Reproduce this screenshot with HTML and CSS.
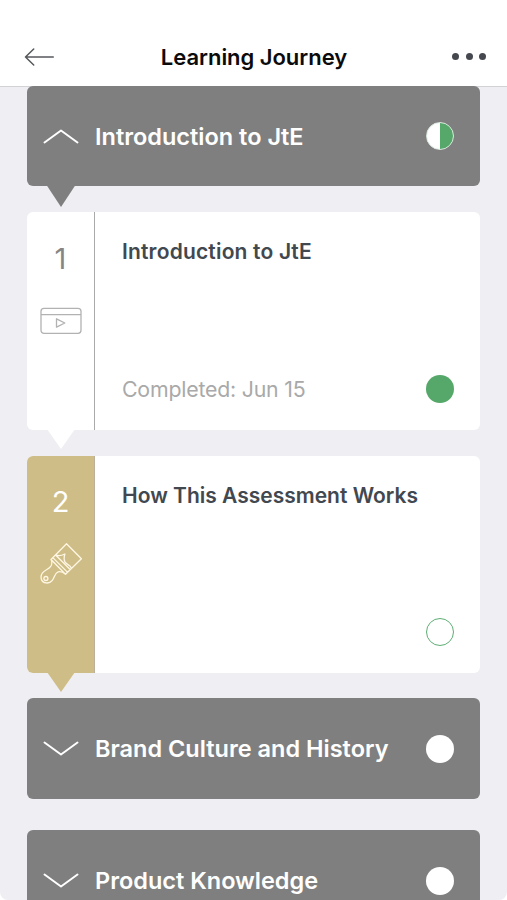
FILE: index.html
```html
<!DOCTYPE html>
<html lang="en">
<head>
<meta charset="utf-8">
<title>Learning Journey</title>
<link rel="stylesheet" href="styles.css">
</head>
<body>
<div class="screen">
  <header class="header">
    <svg class="back" viewBox="0 0 30 18"><path d="M29.3 9H1.5M9.7 1L1.5 9l8.200 8"/></svg>
    <h1 class="header-title">Learning Journey</h1>
    <div class="more"><i></i><i></i><i></i></div>
  </header>
  <main class="list">
    <section class="group group-open">
      <svg class="chevron" viewBox="0 0 36 16"><path d="M1.5 14.5L18 2.500l16.500 12"/></svg>
      <h2 class="group-title">Introduction to JtE</h2>
      <span class="status half"></span>
    </section>
    <article class="lesson">
      <div class="rail">
        <span class="number">1</span>
        <svg class="icon video" viewBox="0 0 42 42"><rect x="1" y="8.300" width="40" height="25" rx="3"/><path d="M1 14.700h40M16.500 18.800v8.400l8.300-4.200z"/></svg>
      </div>
      <div class="body">
        <h3 class="lesson-title title-wide">Introduction to JtE</h3>
        <div class="foot"><span class="completed">Completed: Jun 15</span><span class="status done"></span></div>
      </div>
    </article>
    <article class="lesson current">
      <div class="rail">
        <span class="number">2</span>
        <svg class="icon brush" viewBox="0 0 42 42"><path d="M26.500.800L41.400 15.800 25.500 31.200 11 16.500zM12.800 14.600l14.800 14.800M15.600 12l14.800 14.700M11.200 16.700c2 5.200-.5 7.700-4.700 10-3.700 2-6.200 5.300-5.200 9.300 1.200 4.600 7.700 5.300 10.800 1.600 2.700-3.200 2.500-7.500 6-8.700 2.700-.9 4.900.3 7.400 2.300M15.700 11.900c3.200 1.500 5.900.7 9.200-.9-1.100 3.100-1 5.900.2 8.200 1.700 2.900 5.500 2.200 6.300 6.300"/><circle cx="5.900" cy="35.500" r="2"/></svg>
      </div>
      <div class="body">
        <h3 class="lesson-title">How This Assessment Works</h3>
        <div class="foot"><span class="status todo"></span></div>
      </div>
    </article>
    <section class="group">
      <svg class="chevron" viewBox="0 0 36 16"><path d="M1.500 1.500L18 13.500l16.500-12"/></svg>
      <h2 class="group-title">Brand Culture and History</h2>
      <span class="status"></span>
    </section>
    <section class="group">
      <svg class="chevron" viewBox="0 0 36 16"><path d="M1.500 1.500L18 13.500l16.500-12"/></svg>
      <h2 class="group-title">Product Knowledge</h2>
      <span class="status"></span>
    </section>
  </main>
</div>
</body>
</html>
```
FILE: styles.css
```css
* { box-sizing: border-box; }
body { margin: 0; background: #fff; font-family: Inter, "Liberation Sans", sans-serif; }
h1, h2, h3 { margin: 0; white-space: nowrap; }
svg { fill: none; display: block; flex: none; }
.screen { height: 900px; overflow: hidden; background: #efeef3; border-radius: 0 0 8px 8px; display: flex; flex-direction: column; }
.header { flex: none; height: 87px; padding: 27px 21px 0 24px; background: #fff; border-bottom: 1px solid #d2d2d5; display: grid; grid-template-columns: 36px 1fr 39px; align-items: center; }
.back { width: 30px; height: 18px; stroke: #55585c; stroke-width: 1.500; stroke-linecap: round; stroke-linejoin: round; }
.header-title { padding-left: 1px; font-size: 22px; line-height: 28px; font-weight: 600; color: #0b0b0c; text-align: center; letter-spacing: -.03px; }
.more { display: flex; gap: 6.500px; justify-content: flex-end; }
.more i { width: 7px; height: 7px; border-radius: 50%; background: #45484e; }
.list { flex: none; padding: 0 27px; margin-top: -1px; }
.group { position: relative; height: 101px; margin-bottom: 31px; padding: 0 26.500px 0 16px; background: #7f7f7f; border-radius: 6px; display: flex; align-items: center; }
.group-open { height: 100px; margin-bottom: 26px; }
.group-open::after { content: ""; position: absolute; left: 19.500px; top: 99px; width: 29px; height: 22px; background: #7f7f7f; clip-path: polygon(0 0, 100% 0, 50% 100%); }
.chevron { width: 36px; height: 16px; stroke: #fff; stroke-width: 2; stroke-linecap: round; stroke-linejoin: round; }
.group-title { margin-left: 16px; padding-top: 1px; flex: 1; color: #fff; font-size: 23.500px; line-height: 30px; font-weight: 600; }
.status { flex: none; width: 28px; height: 28px; border-radius: 50%; background: #fff; }
.half { border: 1px solid #dceadf; background: linear-gradient(90deg, #fff 50%, #55a869 50%); }
.done { background: #55a869; }
.todo { margin-left: auto; border: 1.500px solid #5eae74; }
.lesson { position: relative; height: 218px; margin-bottom: 26px; border-radius: 6px; background: #fff; display: flex; }
.lesson::after { content: ""; position: absolute; left: 20px; top: 217px; width: 28px; height: 20px; background: #fff; clip-path: polygon(0 0, 100% 0, 50% 100%); }
.rail { width: 68px; border-right: 1.500px solid #aaa; display: flex; flex-direction: column; align-items: center; padding-top: 29px; border-radius: 6px 0 0 6px; }
.number { font-size: 29px; line-height: 36px; color: #858585; }
.icon { width: 42px; height: 42px; margin-top: 23px; stroke: #b2b2b2; stroke-width: 1.300; stroke-linejoin: round; }
.current { height: 217px; margin-bottom: 25px; }
.current .rail { padding-top: 28px; background: #cebd86; border-color: #bbb09a; }
.current .number { color: #fff; }
.current .icon { stroke: #fff7e4; }
.current::after { background: #cebd86; top: 216px; }
.body { flex: 1; padding: 25px 26.500px 27px 27px; display: flex; flex-direction: column; justify-content: space-between; }
.lesson-title { color: #42484f; font-size: 21px; line-height: 30px; font-weight: 600; }
.title-wide { letter-spacing: .18px; }
.foot { display: flex; align-items: center; justify-content: space-between; }
.completed { color: #a9a9a9; font-size: 21.300px; line-height: 28px; letter-spacing: -.2px; white-space: nowrap; }
```
